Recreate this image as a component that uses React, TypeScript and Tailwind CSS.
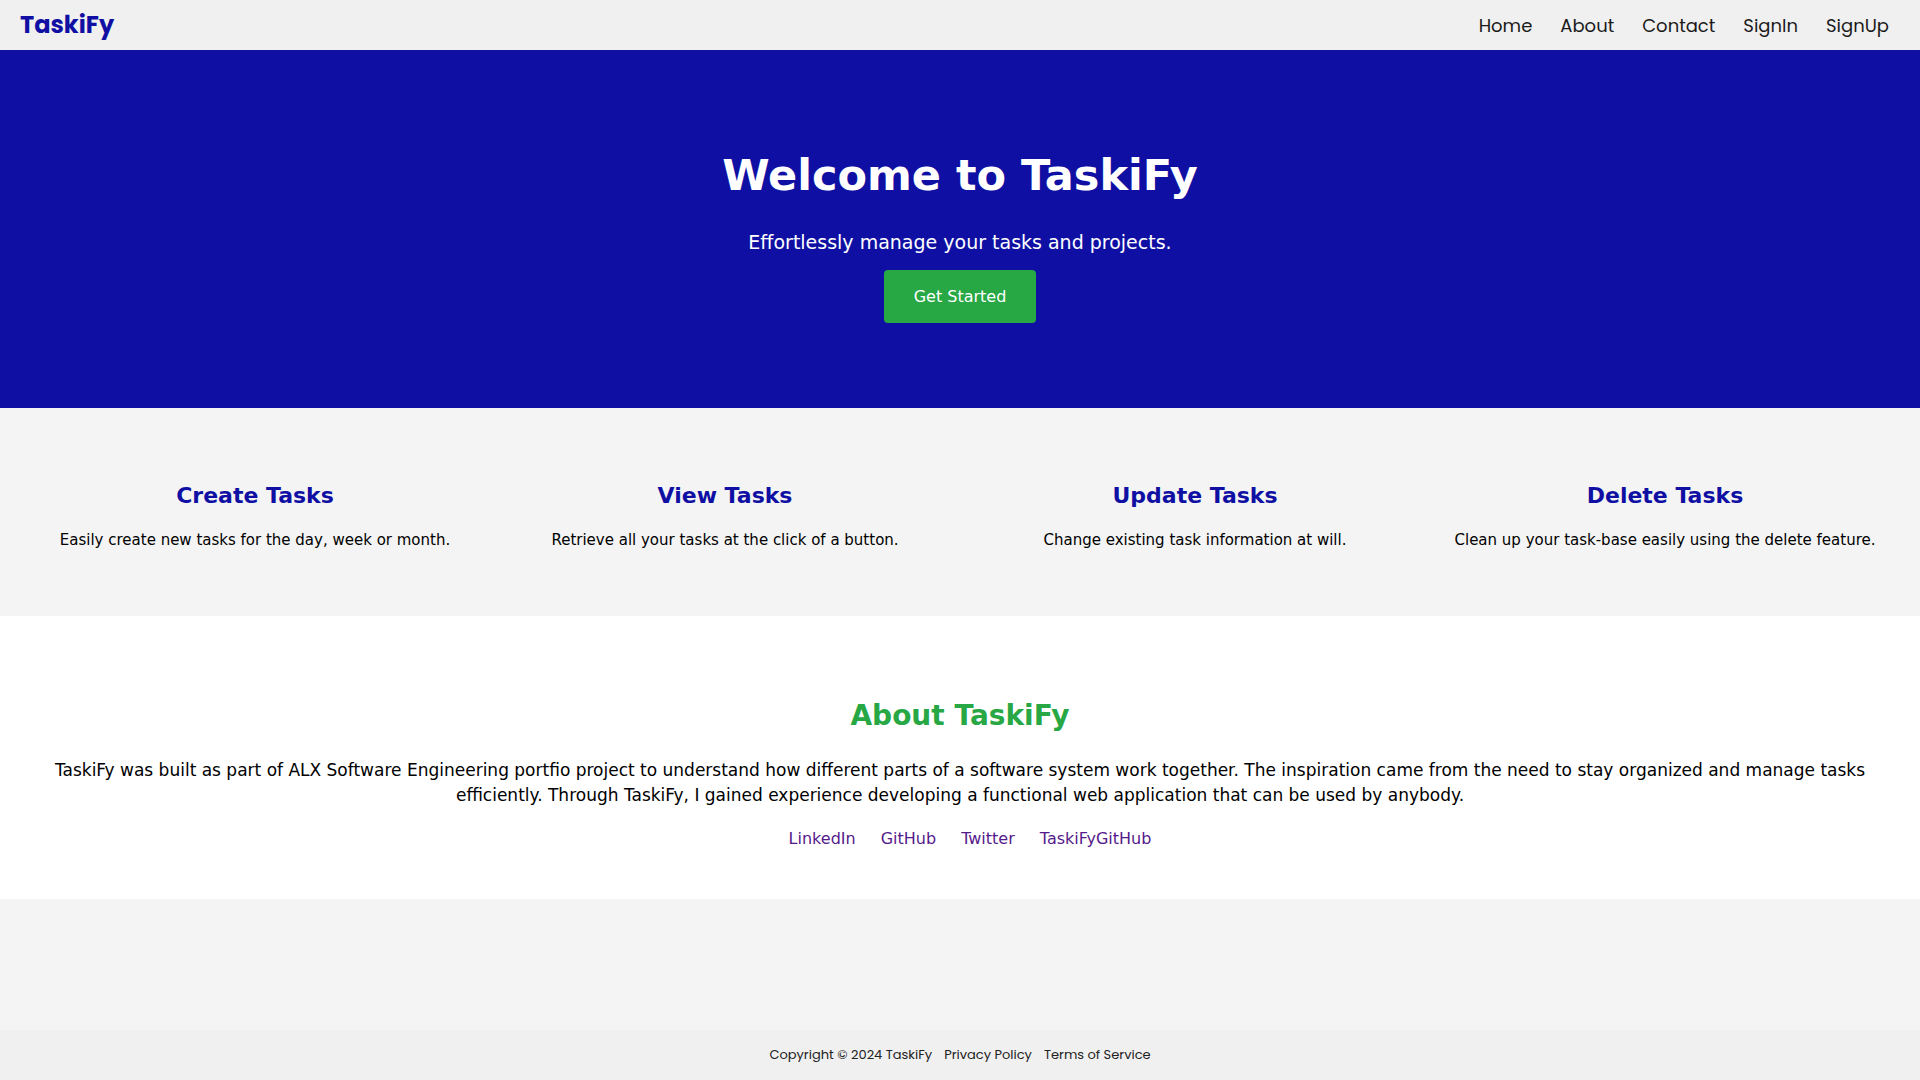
import React from "react";

const comic = "font-['Comic_Sans_MS','DejaVu_Sans',sans-serif]";
const pop = "font-['Poppins','Open_Sans',sans-serif]";

const features = [
  { t: "Create Tasks", d: "Easily create new tasks for the day, week or month." },
  { t: "View Tasks", d: "Retrieve all your tasks at the click of a button." },
  { t: "Update Tasks", d: "Change existing task information at will." },
  { t: "Delete Tasks", d: "Clean up your task-base easily using the delete feature." },
];

export default function App() {
  return (
    <div className={`min-h-screen flex flex-col bg-[#f4f4f4] ${comic}`}>
      <nav className={`h-[50px] bg-[#f0f0f0] flex items-center justify-between pl-5 pr-[31px] ${pop}`}>
        <div className="text-[24px] font-bold text-[#0f10a3]">TaskiFy</div>
        <ul className="flex gap-[28px] text-[18px] text-[#1a1a1a]">
          <li>Home</li>
          <li>About</li>
          <li>Contact</li>
          <li>SignIn</li>
          <li>SignUp</li>
        </ul>
      </nav>
      <section className="h-[358px] bg-[#0f10a3] text-white flex flex-col items-center pt-[85px]">
        <h1 className="text-[43px] font-bold leading-[80px]">Welcome to TaskiFy</h1>
        <p className="text-[19px] mt-[12px] leading-[30px]">Effortlessly manage your tasks and projects.</p>
        <button className="mt-[13px] w-[152px] h-[53px] bg-[#28a745] rounded-[4px] text-[16px] text-white">Get Started</button>
      </section>
      <section className="h-[208px] bg-[#f4f4f4] grid grid-cols-4 px-5 pt-[70px]">
        {features.map((f) => (
          <div key={f.t} className="flex flex-col items-center text-center">
            <h3 className="text-[22px] font-bold text-[#0f10a3] leading-[36px]">{f.t}</h3>
            <p className="text-[15px] text-black mt-[14px] leading-[24px]">{f.d}</p>
          </div>
        ))}
      </section>
      <section className="h-[283px] bg-white flex flex-col items-center pt-[77px] px-[40px] text-center">
        <h2 className="text-[28px] font-bold text-[#28a745] leading-[46px]">About TaskiFy</h2>
        <p className="text-[17px] text-black mt-[19px] leading-[25px]">
          TaskiFy was built as part of ALX Software Engineering portfio project to understand how different parts of a software system work together. The inspiration came from the need to stay organized and manage tasks efficiently. Through TaskiFy, I gained experience developing a functional web application that can be used by anybody.
        </p>
        <div className="flex gap-[25px] mt-[19px] pl-[20px] text-[16px] text-[#551a8b]">
          <a>LinkedIn</a>
          <a>GitHub</a>
          <a>Twitter</a>
          <a>TaskiFyGitHub</a>
        </div>
      </section>
      <div className="flex-1 bg-[#f4f4f4]" />
      <footer className={`h-[50px] bg-[#f0f0f0] flex items-center justify-center gap-[12px] text-[13px] text-[#222] ${pop}`}>
        <span>Copyright © 2024 TaskiFy</span>
        <span>Privacy Policy</span>
        <span>Terms of Service</span>
      </footer>
    </div>
  );
}
